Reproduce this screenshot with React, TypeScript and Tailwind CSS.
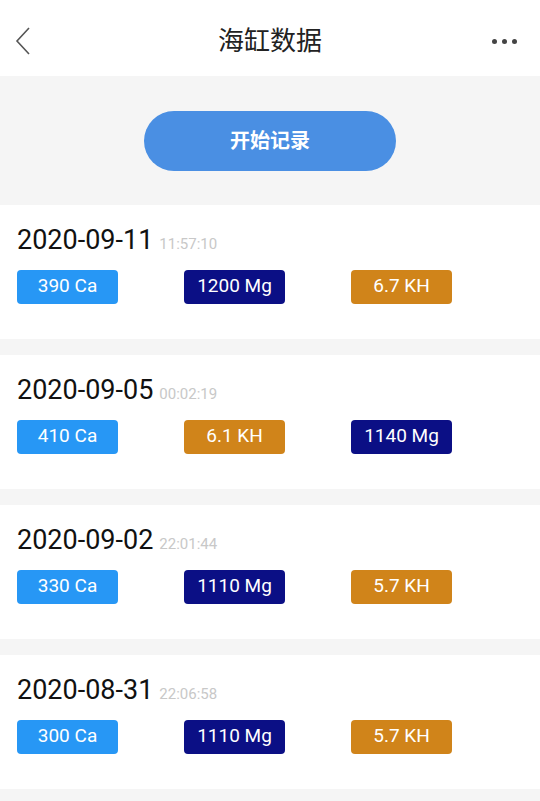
import React from 'react';

type Tag = { label: string; kind: 'ca' | 'mg' | 'kh' };

interface Record {
  date: string;
  time: string;
  tags: Tag[];
}

const records: Record[] = [
  {
    date: '2020-09-11',
    time: '11:57:10',
    tags: [
      { label: '390 Ca', kind: 'ca' },
      { label: '1200 Mg', kind: 'mg' },
      { label: '6.7 KH', kind: 'kh' },
    ],
  },
  {
    date: '2020-09-05',
    time: '00:02:19',
    tags: [
      { label: '410 Ca', kind: 'ca' },
      { label: '6.1 KH', kind: 'kh' },
      { label: '1140 Mg', kind: 'mg' },
    ],
  },
  {
    date: '2020-09-02',
    time: '22:01:44',
    tags: [
      { label: '330 Ca', kind: 'ca' },
      { label: '1110 Mg', kind: 'mg' },
      { label: '5.7 KH', kind: 'kh' },
    ],
  },
  {
    date: '2020-08-31',
    time: '22:06:58',
    tags: [
      { label: '300 Ca', kind: 'ca' },
      { label: '1110 Mg', kind: 'mg' },
      { label: '5.7 KH', kind: 'kh' },
    ],
  },
];

const tagColor = {
  ca: 'bg-[#2797f5]',
  mg: 'bg-[#0b0f85]',
  kh: 'bg-[#d0841a]',
};

const font = { fontFamily: 'Roboto, "Noto Sans CJK SC", sans-serif' };

const App: React.FC = () => {
  return (
    <div className="w-[540px] h-[801px] bg-[#f5f5f5] overflow-hidden" style={font}>
      <div className="h-[76px] bg-white grid grid-cols-[60px_1fr_60px] items-center px-[14px] pt-[6px]">
        <svg width="18" height="30" viewBox="0 0 18 30" fill="none">
          <path d="M15 2 L3 15 L15 28" stroke="#555" strokeWidth="1.6" />
        </svg>
        <h1 className="text-[26px] text-[#222] text-center">海缸数据</h1>
        <div className="flex justify-end gap-[5px] pr-[9px]">
          <span className="w-[5px] h-[5px] rounded-full bg-[#444]" />
          <span className="w-[5px] h-[5px] rounded-full bg-[#444]" />
          <span className="w-[5px] h-[5px] rounded-full bg-[#444]" />
        </div>
      </div>

      <div className="h-[129px] flex items-center justify-center">
        <button className="w-[252px] h-[60px] rounded-full bg-[#4a8fe3] text-white text-[20px] font-bold">
          开始记录
        </button>
      </div>

      <div className="flex flex-col gap-[16px]">
        {records.map(r => (
          <div key={r.date} className="bg-white h-[134px] px-[17px] pt-[15px]">
            <div className="flex items-baseline">
              <span className="text-[27px] text-[#111]">{r.date}</span>
              <span className="text-[15px] text-[#c8c8c8] ml-[6px]">{r.time}</span>
            </div>
            <div className="flex gap-[66px] mt-[9px]">
              {r.tags.map(t => (
                <span
                  key={t.label}
                  className={`w-[101px] h-[34px] rounded-[4px] flex items-center justify-center text-white text-[19px] ${tagColor[t.kind]}`}
                >
                  {t.label}
                </span>
              ))}
            </div>
          </div>
        ))}
      </div>
    </div>
  );
};

export default App;
